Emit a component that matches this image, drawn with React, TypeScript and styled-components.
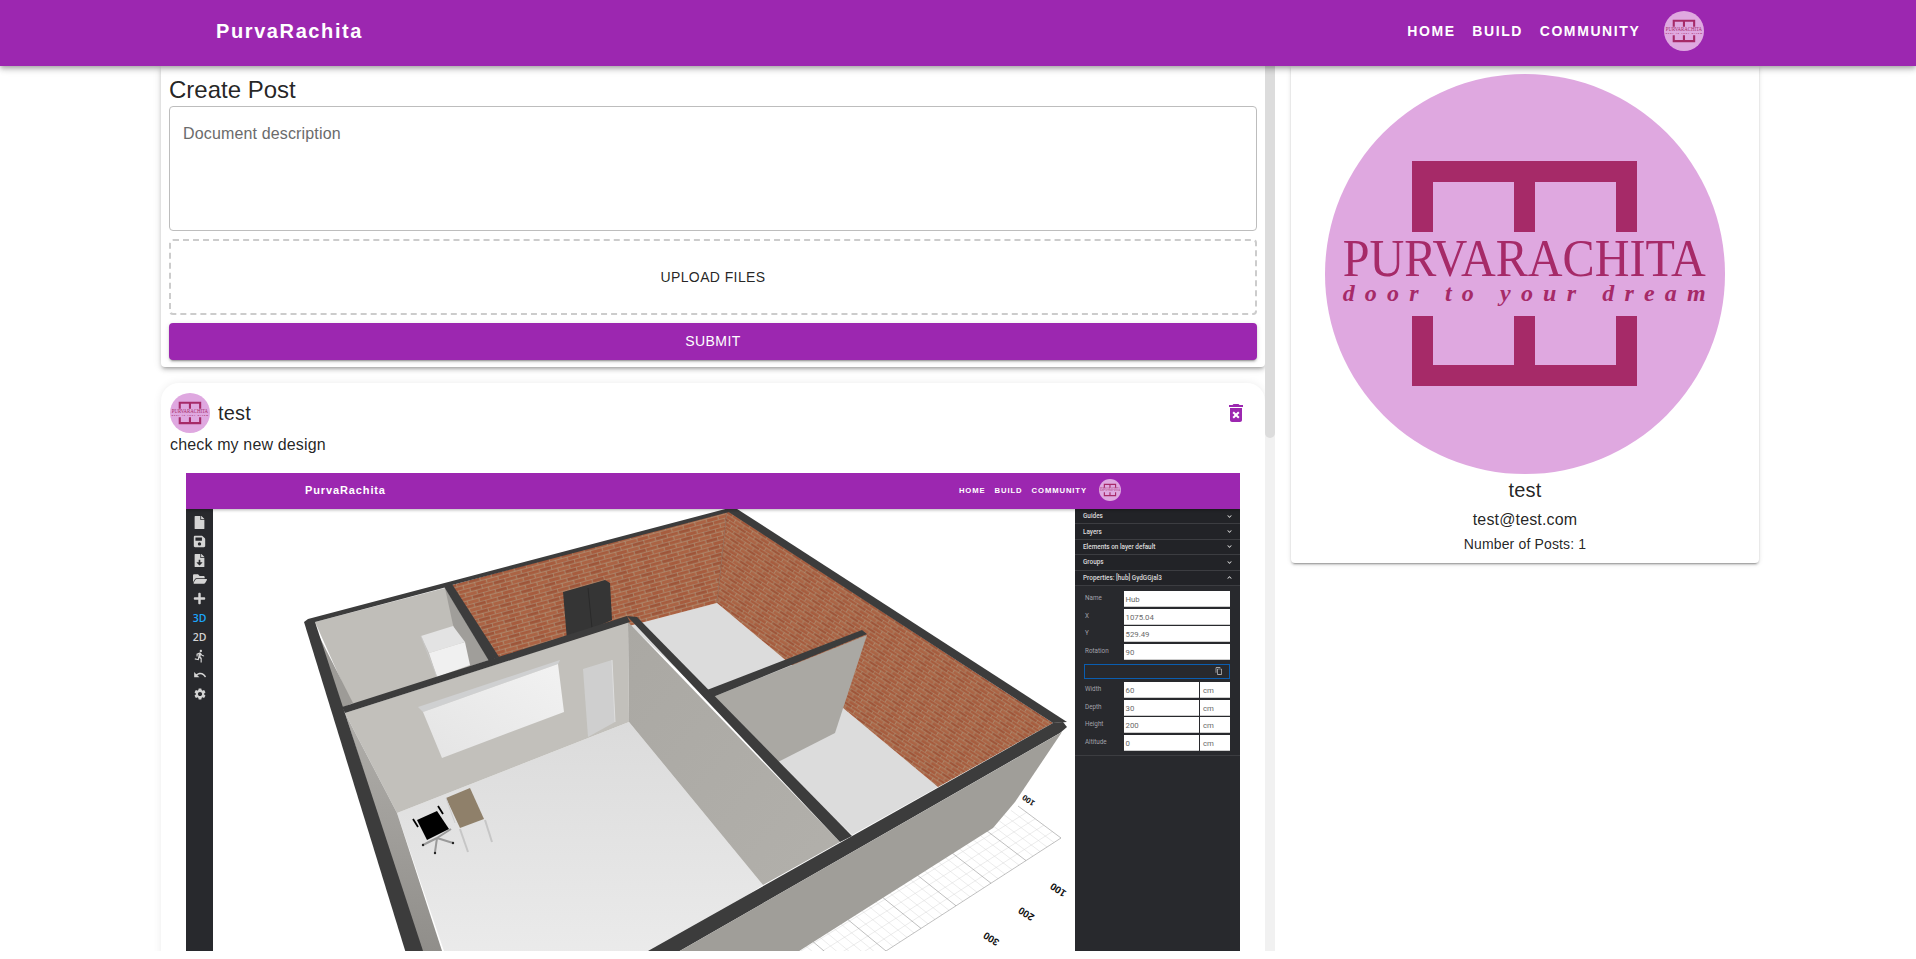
import React from "react";
import styled, { createGlobalStyle } from "styled-components";
import { FaFile, FaSave, FaFileDownload, FaFolderOpen, FaPlus, FaChevronDown, FaChevronUp } from "react-icons/fa";
import { MdDirectionsRun, MdUndo, MdSettings, MdContentCopy } from "react-icons/md";

const PURPLE = "#9c27b0";

const Global = createGlobalStyle`
  html, body { margin: 0; padding: 0; background: #fff; height: 100%; overflow: hidden; }
  body { font-family: "Liberation Sans", Arial, sans-serif; color: rgba(0,0,0,.87); }
  * { box-sizing: border-box; }
`;

const Page = styled.div`
  height: 959px;
  overflow: hidden;
  display: flex;
  flex-direction: column;
`;

const Bar = styled.header`
  flex: none;
  height: 66px;
  background: ${PURPLE};
  color: #fff;
  display: flex;
  align-items: center;
  padding: 0 212px 4px 216px;
  position: relative;
  z-index: 5;
  box-shadow: 0 2px 4px -1px rgba(0,0,0,.2), 0 4px 5px rgba(0,0,0,.14), 0 1px 10px rgba(0,0,0,.12);
`;

const Brand = styled.div`
  flex: 1;
  font-size: 20px;
  font-weight: 700;
  letter-spacing: 1.6px;
`;

const NavLink = styled.a`
  font-size: 14px;
  font-weight: 700;
  letter-spacing: 1.6px;
  margin-right: 16.6px;
`;

const AvatarBox = styled.div<{ $size: number; $gap?: number }>`
  flex: none;
  width: ${(p) => p.$size}px;
  height: ${(p) => p.$size}px;
  margin-left: ${(p) => p.$gap ?? 0}px;
`;

const Columns = styled.main`
  flex: none;
  height: 885px;
  padding-left: 150px;
  display: flex;
`;

const Scroller = styled.div`
  flex: none;
  width: 1115px;
  height: 885px;
  padding-left: 11px;
  overflow: hidden;
`;

const Track = styled.div`
  flex: none;
  width: 10px;
  height: 885px;
  background: #f1f1f1;
`;

const Thumb = styled.div`
  height: 372px;
  background: #dcdcdc;
  border-radius: 0 0 5px 5px;
`;

const Feed = styled.div`
  display: flex;
  flex-direction: column;
  gap: 16px;
`;

const CreateCard = styled.section`
  background: #fff;
  border-radius: 0 0 4px 4px;
  padding: 8px 8px 7.5px;
  display: flex;
  flex-direction: column;
  box-shadow: 0 3px 3px -2px rgba(0,0,0,.2), 0 3px 4px rgba(0,0,0,.14), 0 1px 8px rgba(0,0,0,.12);
`;

const CardTitle = styled.h2`
  margin: 0;
  font-size: 24px;
  font-weight: 400;
  line-height: 32px;
`;

const Description = styled.textarea`
  display: block;
  width: 100%;
  height: 125px;
  padding: 15px 13px;
  border: 1px solid #bdbdbd;
  border-radius: 4px;
  resize: none;
  outline: none;
  font: 400 16px/1.4375 "Liberation Sans", Arial, sans-serif;
  letter-spacing: .15px;
  &::placeholder { color: #6b6b6b; opacity: 1; }
`;

const Upload = styled.button`
  height: 76px;
  margin-top: 8px;
  background: #fff;
  border: 2px dashed #ccc;
  border-radius: 4px;
  color: rgba(0,0,0,.87);
  font: 400 14px "Liberation Sans", Arial, sans-serif;
  letter-spacing: .4px;
  text-transform: uppercase;
`;

const Submit = styled.button`
  height: 36.5px;
  margin-top: 8px;
  background: ${PURPLE};
  border: 0;
  border-radius: 4px;
  color: #fff;
  font: 400 14px "Liberation Sans", Arial, sans-serif;
  letter-spacing: .4px;
  text-transform: uppercase;
  box-shadow: 0 3px 1px -2px rgba(0,0,0,.2), 0 2px 2px rgba(0,0,0,.14), 0 1px 5px rgba(0,0,0,.12);
`;

const PostCard = styled.article`
  background: #fff;
  border-radius: 18px;
  padding: 10px 25px 16px 9px;
  box-shadow: 0 0 8px rgba(0,0,0,.08);
`;

const PostHead = styled.div`
  display: flex;
  align-items: center;
  gap: 8px;
  height: 40px;
`;

const PostAuthor = styled.div`
  flex: 1;
  font-size: 20px;
  letter-spacing: .15px;
`;

const DeleteBtn = styled.svg`
  width: 24px;
  height: 24px;
  margin-right: -8px;
  fill: ${PURPLE};
`;

const PostText = styled.p`
  margin: 0;
  height: 40px;
  font-size: 16px;
  line-height: 24px;
  letter-spacing: .15px;
`;

const Shot = styled.figure`
  margin: 0 0 0 16px;
  width: 1054px;
  height: 527px;
  display: flex;
  flex-direction: column;
  background: #fff;
  overflow: hidden;
`;

const MiniBar = styled.div`
  flex: none;
  height: 36px;
  background: ${PURPLE};
  color: #fff;
  display: flex;
  align-items: center;
  padding: 0 119.4px 2px 119px;
  position: relative;
  z-index: 2;
  box-shadow: 0 1px 3px rgba(0,0,0,.3);
`;

const MiniBrand = styled.div`
  flex: 1;
  font-size: 11px;
  font-weight: 700;
  letter-spacing: .88px;
`;

const MiniLink = styled.span`
  font-size: 7.7px;
  font-weight: 700;
  letter-spacing: .88px;
  margin-right: 9.1px;
`;

const Builder = styled.div`
  flex: 1;
  display: flex;
  min-height: 0;
`;

const Tools = styled.div`
  flex: none;
  width: 27px;
  background: #28292d;
  padding-top: 3.5px;
  display: flex;
  flex-direction: column;
`;

const Tool = styled.div<{ $on?: boolean }>`
  height: 19.1px;
  display: flex;
  align-items: center;
  justify-content: center;
  font: 600 10.5px "Open Sans", sans-serif;
  color: ${(p) => (p.$on ? "#1ca6fc" : "#d4d4d4")};
`;

const Scene = styled.svg`
  flex: none;
  width: 862px;
  height: 491px;
  display: block;
`;

const Side = styled.aside`
  flex: none;
  width: 165px;
  background: #28292d;
`;

const SideHead = styled.div`
  height: 15.4px;
  padding: 0 8px;
  display: flex;
  align-items: center;
  justify-content: space-between;
  background: #222327;
  border-bottom: 1px solid #3c3d41;
  color: #dcdcdc;
  font: 500 6.4px Roboto, sans-serif;
`;

const SideBody = styled.div`
  padding: 5px 10px 4px 10px;
  border-bottom: 1px solid #3c3d41;
  display: flex;
  flex-direction: column;
  gap: 1.7px;
`;

const Field = styled.div`
  height: 16px;
  display: flex;
  gap: 1.5px;
`;

const FieldLabel = styled.span`
  flex: none;
  width: 37px;
  color: #a2a2aa;
  font: 400 6.3px/14px Roboto, sans-serif;
`;

const FieldValue = styled.span`
  flex: 1;
  background: #fff;
  color: #6a6a6a;
  border-bottom: 1px solid #ccc;
  padding-left: 2px;
  font: 400 7.8px/17px Roboto, sans-serif;
`;

const FieldUnit = styled(FieldValue)`
  flex: none;
  width: 30px;
  padding-left: 3px;
`;

const CopyBox = styled.div`
  height: 15px;
  margin: 2px 0 1.5px -1px;
  border: 1px solid #0a5db0;
  display: flex;
  align-items: center;
  justify-content: flex-end;
  padding-right: 6px;
  color: #cfcfcf;
`;

const ProfileCard = styled.aside`
  flex: none;
  width: 468px;
  height: 497px;
  margin-left: 16px;
  background: #fff;
  border-radius: 0 0 4px 4px;
  padding-top: 8px;
  display: flex;
  flex-direction: column;
  align-items: center;
  text-align: center;
  box-shadow: 0 3px 1px -2px rgba(0,0,0,.2), 0 2px 2px rgba(0,0,0,.14), 0 1px 5px rgba(0,0,0,.12);
`;

const ProfileName = styled.div`
  font-size: 20px;
  line-height: 32px;
  letter-spacing: .15px;
`;

const ProfileMail = styled.div`
  margin-top: 2px;
  font-size: 16px;
  line-height: 24px;
  letter-spacing: .15px;
`;

const ProfileCount = styled.div`
  margin-top: 2px;
  font-size: 14px;
  line-height: 20px;
  letter-spacing: .15px;
`;

const LogoSvg = styled.svg`
  display: block;
  width: 100%;
  height: 100%;
`;

const LogoTitle = styled.text`
  font-family: "Liberation Serif", serif;
  font-size: 53px;
  fill: #a62a68;
`;

const LogoTag = styled.text`
  font-family: "Liberation Serif", serif;
  font-style: italic;
  font-weight: 700;
  font-size: 24px;
  fill: #a62a68;
`;

const Logo = () => (
  <LogoSvg viewBox="0 0 400 400">
    <circle cx="200" cy="200" r="200" fill="#dfa8e0" />
    <path
      fill="#a62a68"
      d="M87 87H312V158H291V108H210V158H189V108H108V158H87ZM87 242H108V291H189V242H210V291H291V242H312V312H87Z"
    />
    <LogoTitle x="17.7" y="202" textLength="363" lengthAdjust="spacingAndGlyphs">PURVARACHITA</LogoTitle>
    <LogoTag x="17.7" y="227" textLength="363" lengthAdjust="spacing">door to your dream</LogoTag>
  </LogoSvg>
);

type Line = [number, number, number, number];

const gridLines = () => {
  const minor: Line[] = [];
  const major: Line[] = [];
  const p = (t: number) => [1018 - 35.5 * t, 806 + 21.5 * t];
  const q = (t: number) => [1061 - 35 * t, 838 + 22.6 * t];
  for (let i = 0; i <= 35; i++) {
    const t = i / 5;
    const a = p(t);
    const b = q(t);
    (i % 5 === 0 ? major : minor).push([a[0], a[1], b[0], b[1]]);
  }
  for (let i = 1; i <= 5; i++) {
    const s = i / 5;
    const a = p(0);
    const b = q(0);
    const c = p(7);
    const d = q(7);
    const l: Line = [a[0] + (b[0] - a[0]) * s, a[1] + (b[1] - a[1]) * s, c[0] + (d[0] - c[0]) * s, c[1] + (d[1] - c[1]) * s];
    (i === 5 ? major : minor).push(l);
  }
  return { minor, major };
};

const CAP = "#3c3c3c";

const BrickTile = () => (
  <>
    <rect width="24" height="8" fill="#a75c3e" />
    <rect x="12" width="12" height="4" fill="#9f5539" />
    <rect x="6" y="4" width="12" height="4" fill="#ab6344" />
    <path d="M0 .3H24M0 4.3H24M.3 .3V4.3M12.3 .3V4.3M6.3 4.3V8M18.3 4.3V8" stroke="#b0a58b" strokeWidth=".6" fill="none" />
  </>
);

const House = () => {
  const { minor, major } = gridLines();
  return (
    <Scene viewBox="213 509 862 491">
      <defs>
        <pattern id="brickBack" width="24" height="8" patternUnits="userSpaceOnUse" patternTransform="rotate(-15.3 452 585)">
          <BrickTile />
        </pattern>
        <pattern id="brickRight" width="24" height="8" patternUnits="userSpaceOnUse" patternTransform="rotate(33 727 510) scale(.85)">
          <BrickTile />
        </pattern>
        <linearGradient id="mainFloor" x1="0" y1="0" x2="0" y2="1">
          <stop offset="0" stopColor="#dbdbdb" />
          <stop offset="1" stopColor="#ebebeb" />
        </linearGradient>
        <linearGradient id="windowFill" x1="0" y1="1" x2="1" y2="0">
          <stop offset="0" stopColor="#e4e4e4" />
          <stop offset="1" stopColor="#f2f2f2" />
        </linearGradient>
        <linearGradient id="sideFace" x1="0" y1="0" x2="0" y2="1">
          <stop offset="0" stopColor="#b0aeaa" />
          <stop offset="1" stopColor="#8f8d89" />
        </linearGradient>
        <linearGradient id="longFace" x1="0" y1="0" x2="1" y2="1">
          <stop offset="0" stopColor="#aaa8a3" />
          <stop offset="1" stopColor="#b2b0ab" />
        </linearGradient>
      </defs>

      <g strokeWidth=".5">
        {minor.map((l, i) => (
          <line key={i} x1={l[0]} y1={l[1]} x2={l[2]} y2={l[3]} stroke="#d8d8d8" />
        ))}
        {major.map((l, i) => (
          <line key={i} x1={l[0]} y1={l[1]} x2={l[2]} y2={l[3]} stroke="#808080" />
        ))}
      </g>

      <polygon points="629,722 763,885 647,960 447,960 397,813" fill="url(#mainFloor)" />
      <polygon points="717,603 938,787 852,835 630,625" fill="#dcdcdc" />
      <polygon points="452,585 727,510 717,603 498,660" fill="url(#brickBack)" />
      <polygon points="727,510 1053,723 938,787 717,603" fill="url(#brickRight)" />
      <line x1="727" y1="510" x2="717" y2="603" stroke="#7e5440" strokeWidth=".6" />

      <polygon points="563,592 605,580 610,583 612,620 567,640" fill="#353535" />
      <line x1="588" y1="588" x2="592" y2="628" stroke="#272727" strokeWidth=".8" />

      <polygon points="315,622 445,588 489,660 353,707" fill="#c0beb9" />
      <polygon points="315,628 353,703 342,708" fill="#9d9b97" />
      <polygon points="445,588 489,660 470,666 453,625" fill="#a09e9a" />
      <polygon points="421,636 453,626 465,642 429,653" fill="#e3e3e3" />
      <polygon points="429,653 465,642 470,665 437,677" fill="#f0f0f0" />
      <line x1="421" y1="636" x2="437" y2="677" stroke="#c9c9c9" strokeWidth=".8" />

      <polygon points="345,713 628,622 629,722 397,813" fill="#c2c0bb" />
      <polygon points="418,707 560,660 558,664 423,712" fill="#cfd0d1" />
      <polygon points="423,712 558,664 564,712 442,758" fill="url(#windowFill)" />
      <polygon points="583,669 612,660 615,722 588,737" fill="#cfcfcf" />
      <line x1="612" y1="660" x2="615" y2="722" stroke="#dedede" strokeWidth="1" />

      <polygon points="345,713 397,813 445,960 423,960" fill="url(#sideFace)" />
      <polygon points="628,622 840,842 763,885 629,722" fill="url(#longFace)" />
      <polygon points="713,697 867,635 835,733 778,762" fill="#aaa8a3" />

      <polygon points="446,798 470,788 484,819 460,828" fill="#8f806a" />
      <g stroke="#c6c6c6" strokeWidth="2" fill="none">
        <line x1="460" y1="829" x2="468" y2="852" />
        <line x1="485" y1="820" x2="492" y2="842" />
      </g>
      <line x1="446" y1="798" x2="455" y2="823" stroke="#cfcfcf" strokeWidth="1" />
      <g stroke="#9a9a9a" strokeWidth="2">
        <line x1="437" y1="838" x2="423" y2="845" />
        <line x1="437" y1="838" x2="435" y2="852" />
        <line x1="437" y1="838" x2="453" y2="843" />
        <line x1="437" y1="838" x2="451" y2="829" />
      </g>
      <polygon points="417,820 437,811 449,829 427,840" fill="#000" />
      <g stroke="#000" strokeWidth="1.8">
        <line x1="413" y1="819" x2="418" y2="827" />
        <line x1="438" y1="806" x2="443" y2="814" />
      </g>
      <g fill="#222">
        <circle cx="423" cy="845" r="1.2" />
        <circle cx="435" cy="853" r="1.2" />
        <circle cx="453" cy="843" r="1.2" />
      </g>

      <g fill={CAP}>
        <polygon points="304,622 308,619 733,507 733,511 452,585 443,588 315,622" />
        <polygon points="304,622 315,622 426,960 408,960" />
        <polygon points="730,507 734,507 1067,722 1053,723 727,511" />
        <polygon points="443,585 452,584 499,657 489,661" />
        <polygon points="342,707 627,616 630,622 345,713" />
        <polygon points="627,616 637,617 852,836 840,842" />
        <polygon points="707,690 862,630 867,634 713,697" />
        <polygon points="1053,723 1063,722 1067,727 1060,733 664,960 632,960" />
      </g>
      <polygon points="1062,732 1015,802 993,828 785,960 664,960" fill="#a09e99" />

      <g fontFamily="'Liberation Sans', sans-serif" fill="#111" fontWeight="700">
        <text fontSize="8" textAnchor="middle" transform="translate(1030 798) rotate(213)">100</text>
        <text fontSize="10" textAnchor="middle" transform="translate(1060 887) rotate(214)">100</text>
        <text fontSize="10" textAnchor="middle" transform="translate(1028 911) rotate(212)">200</text>
        <text fontSize="10" textAnchor="middle" transform="translate(993 936) rotate(212)">300</text>
      </g>
    </Scene>
  );
};

const deletePath =
  "M6 19c0 1.1.9 2 2 2h8c1.1 0 2-.9 2-2V7H6v12zm2.46-7.12 1.41-1.41L12 12.59l2.12-2.12 1.41 1.41L13.41 14l2.12 2.12-1.41 1.41L12 15.41l-2.12 2.12-1.41-1.41L10.59 14l-2.13-2.12zM15.5 4l-1-1h-5l-1 1H5v2h14V4z";

export default function App() {
  return (
    <Page>
      <Global />
      <Bar>
        <Brand>PurvaRachita</Brand>
        <NavLink>HOME</NavLink>
        <NavLink>BUILD</NavLink>
        <NavLink>COMMUNITY</NavLink>
        <AvatarBox $size={40} $gap={7}>
          <Logo />
        </AvatarBox>
      </Bar>
      <Columns>
        <Scroller>
          <Feed>
            <CreateCard>
              <CardTitle>Create Post</CardTitle>
              <Description placeholder="Document description" />
              <Upload>Upload files</Upload>
              <Submit>Submit</Submit>
            </CreateCard>
            <PostCard>
              <PostHead>
                <AvatarBox $size={40}>
                  <Logo />
                </AvatarBox>
                <PostAuthor>test</PostAuthor>
                <DeleteBtn viewBox="0 0 24 24">
                  <path d={deletePath} />
                </DeleteBtn>
              </PostHead>
              <PostText>check my new design</PostText>
              <Shot>
                <MiniBar>
                  <MiniBrand>PurvaRachita</MiniBrand>
                  <MiniLink>HOME</MiniLink>
                  <MiniLink>BUILD</MiniLink>
                  <MiniLink>COMMUNITY</MiniLink>
                  <AvatarBox $size={22} $gap={2.6}>
                    <Logo />
                  </AvatarBox>
                </MiniBar>
                <Builder>
                  <Tools>
                    <Tool><FaFile size={13} /></Tool>
                    <Tool><FaSave size={13} /></Tool>
                    <Tool><FaFileDownload size={13} /></Tool>
                    <Tool><FaFolderOpen size={14} /></Tool>
                    <Tool><FaPlus size={13} /></Tool>
                    <Tool $on>3D</Tool>
                    <Tool>2D</Tool>
                    <Tool><MdDirectionsRun size={14} /></Tool>
                    <Tool><MdUndo size={14} /></Tool>
                    <Tool><MdSettings size={14} /></Tool>
                  </Tools>
                  <House />
                  <Side>
                    <SideHead>Guides<FaChevronDown size={5} /></SideHead>
                    <SideHead>Layers<FaChevronDown size={5} /></SideHead>
                    <SideHead>Elements on layer default<FaChevronDown size={5} /></SideHead>
                    <SideHead>Groups<FaChevronDown size={5} /></SideHead>
                    <SideHead>Properties: [hub] GydGGjal3<FaChevronUp size={5} /></SideHead>
                    <SideBody>
                      <Field><FieldLabel>Name</FieldLabel><FieldValue>Hub</FieldValue></Field>
                      <Field><FieldLabel>X</FieldLabel><FieldValue>1075.04</FieldValue></Field>
                      <Field><FieldLabel>Y</FieldLabel><FieldValue>529.49</FieldValue></Field>
                      <Field><FieldLabel>Rotation</FieldLabel><FieldValue>90</FieldValue></Field>
                      <CopyBox><MdContentCopy size={8} /></CopyBox>
                      <Field><FieldLabel>Width</FieldLabel><FieldValue>60</FieldValue><FieldUnit>cm</FieldUnit></Field>
                      <Field><FieldLabel>Depth</FieldLabel><FieldValue>30</FieldValue><FieldUnit>cm</FieldUnit></Field>
                      <Field><FieldLabel>Height</FieldLabel><FieldValue>200</FieldValue><FieldUnit>cm</FieldUnit></Field>
                      <Field><FieldLabel>Altitude</FieldLabel><FieldValue>0</FieldValue><FieldUnit>cm</FieldUnit></Field>
                    </SideBody>
                  </Side>
                </Builder>
              </Shot>
            </PostCard>
          </Feed>
        </Scroller>
        <Track>
          <Thumb />
        </Track>
        <ProfileCard>
          <AvatarBox $size={400}>
            <Logo />
          </AvatarBox>
          <ProfileName>test</ProfileName>
          <ProfileMail>test@test.com</ProfileMail>
          <ProfileCount>Number of Posts: 1</ProfileCount>
        </ProfileCard>
      </Columns>
    </Page>
  );
}
